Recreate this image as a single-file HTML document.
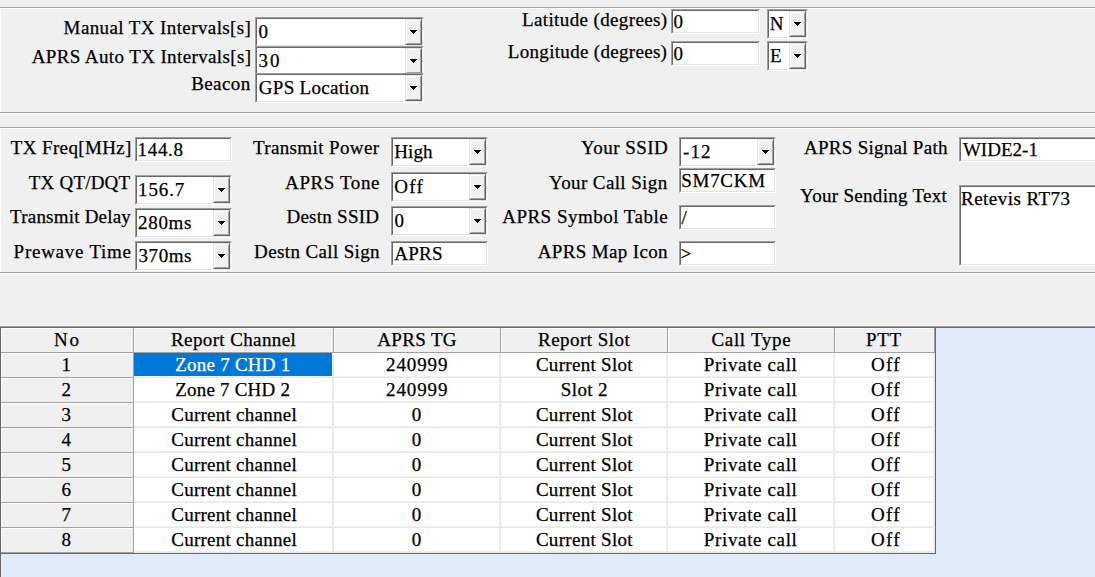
<!DOCTYPE html>
<html><head><meta charset="utf-8"><style>
html,body{margin:0;padding:0;width:1095px;height:577px;overflow:hidden;background:#f0f0f0;position:relative}
div{position:absolute;box-sizing:border-box}
.t{font-family:"Liberation Serif",serif;font-size:19px;line-height:20px;white-space:pre;color:#000;-webkit-text-stroke:0.25px #000}
.r{text-align:right}
.c{text-align:center}
.sk{border-style:solid;border-width:1px;border-color:#a0a0a0 #ffffff #ffffff #a0a0a0;background:#fff}
.ski{left:0;top:0;right:0;bottom:0;border-style:solid;border-width:1px;border-color:#696969 #e3e3e3 #e3e3e3 #696969}
.btn{border-style:solid;border-width:1px;border-color:#e3e3e3 #696969 #696969 #e3e3e3;background:#f0f0f0}
.bti{left:0;top:0;right:0;bottom:0;border-style:solid;border-width:1px;border-color:#ffffff #a0a0a0 #a0a0a0 #ffffff}
.ar{height:1px;background:#000}
</style></head><body>
<div class="ln" style="left:0px;top:7px;width:1095px;height:1px;background:#a0a0a0"></div>
<div class="ln" style="left:0px;top:8px;width:1095px;height:1px;background:#ffffff"></div>
<div class="ln" style="left:0px;top:8px;width:1px;height:104px;background:#ffffff"></div>
<div class="ln" style="left:0px;top:112px;width:1095px;height:1px;background:#a0a0a0"></div>
<div class="ln" style="left:0px;top:113px;width:1095px;height:1px;background:#ffffff"></div>
<div class="ln" style="left:0px;top:127px;width:1095px;height:1px;background:#a0a0a0"></div>
<div class="ln" style="left:0px;top:128px;width:1095px;height:1px;background:#ffffff"></div>
<div class="ln" style="left:0px;top:128px;width:1px;height:144px;background:#ffffff"></div>
<div class="ln" style="left:0px;top:272px;width:1095px;height:1px;background:#a0a0a0"></div>
<div class="ln" style="left:0px;top:273px;width:1095px;height:1px;background:#ffffff"></div>
<div class="t" style="left:63.60px;top:18px;letter-spacing:0.395px">Manual TX Intervals[s]</div>
<div class="t" style="left:31.70px;top:47px;letter-spacing:0.383px">APRS Auto TX Intervals[s]</div>
<div class="t" style="left:191.20px;top:74px;letter-spacing:0.400px">Beacon</div>
<div class="sk" style="left:255px;top:17px;width:169px;height:30px"><div class="ski"></div></div>
<div class="btn" style="left:405px;top:19px;width:17px;height:26px"><div class="bti"></div></div>
<div class="ar" style="left:410px;top:30px;width:7px"></div>
<div class="ar" style="left:411px;top:31px;width:5px"></div>
<div class="ar" style="left:412px;top:32px;width:3px"></div>
<div class="ar" style="left:413px;top:33px;width:1px"></div>
<div class="t" style="left:258.60px;top:22px">0</div>
<div class="sk" style="left:255px;top:46px;width:169px;height:30px"><div class="ski"></div></div>
<div class="btn" style="left:405px;top:48px;width:17px;height:26px"><div class="bti"></div></div>
<div class="ar" style="left:410px;top:59px;width:7px"></div>
<div class="ar" style="left:411px;top:60px;width:5px"></div>
<div class="ar" style="left:412px;top:61px;width:3px"></div>
<div class="ar" style="left:413px;top:62px;width:1px"></div>
<div class="t" style="left:258.60px;top:51px;letter-spacing:2.000px">30</div>
<div class="sk" style="left:255px;top:73px;width:169px;height:30px"><div class="ski"></div></div>
<div class="btn" style="left:405px;top:75px;width:17px;height:26px"><div class="bti"></div></div>
<div class="ar" style="left:410px;top:86px;width:7px"></div>
<div class="ar" style="left:411px;top:87px;width:5px"></div>
<div class="ar" style="left:412px;top:88px;width:3px"></div>
<div class="ar" style="left:413px;top:89px;width:1px"></div>
<div class="t" style="left:258.85px;top:78px;letter-spacing:0.277px">GPS Location</div>
<div class="t" style="left:522.00px;top:10px;letter-spacing:0.376px">Latitude (degrees)</div>
<div class="t" style="left:507.80px;top:42px;letter-spacing:0.311px">Longitude (degrees)</div>
<div class="sk" style="left:671px;top:9px;width:89px;height:25px"><div class="ski"></div></div>
<div class="t" style="left:673.50px;top:12px">0</div>
<div class="sk" style="left:671px;top:41px;width:89px;height:25px"><div class="ski"></div></div>
<div class="t" style="left:673.50px;top:44px">0</div>
<div class="sk" style="left:767px;top:9px;width:41px;height:30px"><div class="ski"></div></div>
<div class="btn" style="left:789px;top:11px;width:17px;height:26px"><div class="bti"></div></div>
<div class="ar" style="left:794px;top:22px;width:7px"></div>
<div class="ar" style="left:795px;top:23px;width:5px"></div>
<div class="ar" style="left:796px;top:24px;width:3px"></div>
<div class="ar" style="left:797px;top:25px;width:1px"></div>
<div class="t" style="left:769.70px;top:14px">N</div>
<div class="sk" style="left:767px;top:41px;width:41px;height:30px"><div class="ski"></div></div>
<div class="btn" style="left:789px;top:43px;width:17px;height:26px"><div class="bti"></div></div>
<div class="ar" style="left:794px;top:54px;width:7px"></div>
<div class="ar" style="left:795px;top:55px;width:5px"></div>
<div class="ar" style="left:796px;top:56px;width:3px"></div>
<div class="ar" style="left:797px;top:57px;width:1px"></div>
<div class="t" style="left:770.10px;top:46px">E</div>
<div class="t" style="left:10.80px;top:138px;letter-spacing:0.364px">TX Freq[MHz]</div>
<div class="t" style="left:28.80px;top:173px;letter-spacing:0.200px">TX QT/DQT</div>
<div class="t" style="left:10.10px;top:207px;letter-spacing:0.208px">Transmit Delay</div>
<div class="t" style="left:13.60px;top:242px;letter-spacing:0.745px">Prewave Time</div>
<div class="sk" style="left:135px;top:137px;width:97px;height:25px"><div class="ski"></div></div>
<div class="t" style="left:137.50px;top:140px;letter-spacing:0.700px">144.8</div>
<div class="sk" style="left:135px;top:175px;width:97px;height:30px"><div class="ski"></div></div>
<div class="btn" style="left:213px;top:177px;width:17px;height:26px"><div class="bti"></div></div>
<div class="ar" style="left:218px;top:188px;width:7px"></div>
<div class="ar" style="left:219px;top:189px;width:5px"></div>
<div class="ar" style="left:220px;top:190px;width:3px"></div>
<div class="ar" style="left:221px;top:191px;width:1px"></div>
<div class="t" style="left:138.10px;top:180px;letter-spacing:0.875px">156.7</div>
<div class="sk" style="left:135px;top:208px;width:97px;height:30px"><div class="ski"></div></div>
<div class="btn" style="left:213px;top:210px;width:17px;height:26px"><div class="bti"></div></div>
<div class="ar" style="left:218px;top:221px;width:7px"></div>
<div class="ar" style="left:219px;top:222px;width:5px"></div>
<div class="ar" style="left:220px;top:223px;width:3px"></div>
<div class="ar" style="left:221px;top:224px;width:1px"></div>
<div class="t" style="left:138.00px;top:213px;letter-spacing:0.700px">280ms</div>
<div class="sk" style="left:135px;top:241px;width:97px;height:30px"><div class="ski"></div></div>
<div class="btn" style="left:213px;top:243px;width:17px;height:26px"><div class="bti"></div></div>
<div class="ar" style="left:218px;top:254px;width:7px"></div>
<div class="ar" style="left:219px;top:255px;width:5px"></div>
<div class="ar" style="left:220px;top:256px;width:3px"></div>
<div class="ar" style="left:221px;top:257px;width:1px"></div>
<div class="t" style="left:138.50px;top:246px;letter-spacing:0.575px">370ms</div>
<div class="t" style="left:252.90px;top:138px;letter-spacing:0.377px">Transmit Power</div>
<div class="t" style="left:285.10px;top:173px;letter-spacing:0.587px">APRS Tone</div>
<div class="t" style="left:286.40px;top:207px;letter-spacing:0.267px">Destn SSID</div>
<div class="t" style="left:254.10px;top:242px;letter-spacing:0.371px">Destn Call Sign</div>
<div class="sk" style="left:391px;top:137px;width:97px;height:30px"><div class="ski"></div></div>
<div class="btn" style="left:469px;top:139px;width:17px;height:26px"><div class="bti"></div></div>
<div class="ar" style="left:474px;top:150px;width:7px"></div>
<div class="ar" style="left:475px;top:151px;width:5px"></div>
<div class="ar" style="left:476px;top:152px;width:3px"></div>
<div class="ar" style="left:477px;top:153px;width:1px"></div>
<div class="t" style="left:394.20px;top:142px;letter-spacing:0.133px">High</div>
<div class="sk" style="left:391px;top:172px;width:97px;height:30px"><div class="ski"></div></div>
<div class="btn" style="left:469px;top:174px;width:17px;height:26px"><div class="bti"></div></div>
<div class="ar" style="left:474px;top:185px;width:7px"></div>
<div class="ar" style="left:475px;top:186px;width:5px"></div>
<div class="ar" style="left:476px;top:187px;width:3px"></div>
<div class="ar" style="left:477px;top:188px;width:1px"></div>
<div class="t" style="left:394.20px;top:177px;letter-spacing:1.250px">Off</div>
<div class="sk" style="left:391px;top:206px;width:97px;height:30px"><div class="ski"></div></div>
<div class="btn" style="left:469px;top:208px;width:17px;height:26px"><div class="bti"></div></div>
<div class="ar" style="left:474px;top:219px;width:7px"></div>
<div class="ar" style="left:475px;top:220px;width:5px"></div>
<div class="ar" style="left:476px;top:221px;width:3px"></div>
<div class="ar" style="left:477px;top:222px;width:1px"></div>
<div class="t" style="left:394.40px;top:211px">0</div>
<div class="sk" style="left:391px;top:241px;width:97px;height:25px"><div class="ski"></div></div>
<div class="t" style="left:394.30px;top:244px;letter-spacing:0.233px">APRS</div>
<div class="t" style="left:581.00px;top:138px;letter-spacing:0.450px">Your SSID</div>
<div class="t" style="left:549.00px;top:173px;letter-spacing:0.385px">Your Call Sign</div>
<div class="t" style="left:502.20px;top:207px;letter-spacing:0.488px">APRS Symbol Table</div>
<div class="t" style="left:537.80px;top:242px;letter-spacing:0.350px">APRS Map Icon</div>
<div class="sk" style="left:679px;top:137px;width:97px;height:30px"><div class="ski"></div></div>
<div class="btn" style="left:757px;top:139px;width:17px;height:26px"><div class="bti"></div></div>
<div class="ar" style="left:762px;top:150px;width:7px"></div>
<div class="ar" style="left:763px;top:151px;width:5px"></div>
<div class="ar" style="left:764px;top:152px;width:3px"></div>
<div class="ar" style="left:765px;top:153px;width:1px"></div>
<div class="t" style="left:682.90px;top:142px;letter-spacing:1.200px">-12</div>
<div class="sk" style="left:679px;top:168px;width:97px;height:25px"><div class="ski"></div></div>
<div class="t" style="left:681.30px;top:171px;letter-spacing:0.700px">SM7CKM</div>
<div class="sk" style="left:679px;top:205px;width:97px;height:25px"><div class="ski"></div></div>
<div class="t" style="left:681.60px;top:208px">/</div>
<div class="sk" style="left:679px;top:241px;width:97px;height:25px"><div class="ski"></div></div>
<div class="t" style="left:680.60px;top:244px">&gt;</div>
<div class="t" style="left:804.00px;top:138px;letter-spacing:0.273px">APRS Signal Path</div>
<div class="t" style="left:800.10px;top:186px;letter-spacing:0.294px">Your Sending Text</div>
<div class="sk" style="left:959px;top:137px;width:200px;height:25px"><div class="ski"></div></div>
<div class="t" style="left:962.90px;top:140px;letter-spacing:0.017px">WIDE2-1</div>
<div class="sk" style="left:959px;top:185px;width:200px;height:81px"><div class="ski"></div></div>
<div class="t" style="left:961.00px;top:189px;letter-spacing:0.464px">Retevis RT73</div>
<div class="ln" style="left:0px;top:326px;width:1095px;height:251px;background:#dfebf9"></div>
<div class="ln" style="left:0px;top:326px;width:1095px;height:1px;background:#a0a0a0"></div>
<div class="ln" style="left:0px;top:327px;width:1095px;height:1px;background:#696969"></div>
<div class="ln" style="left:0px;top:327px;width:1px;height:250px;background:#696969"></div>
<div class="ln" style="left:1px;top:328px;width:133px;height:25px;background:#f0f0f0"></div>
<div class="ln" style="left:1px;top:328px;width:132px;height:1px;background:#ffffff"></div>
<div class="ln" style="left:1px;top:328px;width:1px;height:24px;background:#ffffff"></div>
<div class="ln" style="left:133px;top:328px;width:1px;height:25px;background:#a0a0a0"></div>
<div class="ln" style="left:1px;top:352px;width:133px;height:1px;background:#a0a0a0"></div>
<div class="ln" style="left:134px;top:328px;width:200px;height:25px;background:#f0f0f0"></div>
<div class="ln" style="left:134px;top:328px;width:199px;height:1px;background:#ffffff"></div>
<div class="ln" style="left:134px;top:328px;width:1px;height:24px;background:#ffffff"></div>
<div class="ln" style="left:333px;top:328px;width:1px;height:25px;background:#a0a0a0"></div>
<div class="ln" style="left:134px;top:352px;width:200px;height:1px;background:#a0a0a0"></div>
<div class="ln" style="left:334px;top:328px;width:167px;height:25px;background:#f0f0f0"></div>
<div class="ln" style="left:334px;top:328px;width:166px;height:1px;background:#ffffff"></div>
<div class="ln" style="left:334px;top:328px;width:1px;height:24px;background:#ffffff"></div>
<div class="ln" style="left:500px;top:328px;width:1px;height:25px;background:#a0a0a0"></div>
<div class="ln" style="left:334px;top:352px;width:167px;height:1px;background:#a0a0a0"></div>
<div class="ln" style="left:501px;top:328px;width:167px;height:25px;background:#f0f0f0"></div>
<div class="ln" style="left:501px;top:328px;width:166px;height:1px;background:#ffffff"></div>
<div class="ln" style="left:501px;top:328px;width:1px;height:24px;background:#ffffff"></div>
<div class="ln" style="left:667px;top:328px;width:1px;height:25px;background:#a0a0a0"></div>
<div class="ln" style="left:501px;top:352px;width:167px;height:1px;background:#a0a0a0"></div>
<div class="ln" style="left:668px;top:328px;width:167px;height:25px;background:#f0f0f0"></div>
<div class="ln" style="left:668px;top:328px;width:166px;height:1px;background:#ffffff"></div>
<div class="ln" style="left:668px;top:328px;width:1px;height:24px;background:#ffffff"></div>
<div class="ln" style="left:834px;top:328px;width:1px;height:25px;background:#a0a0a0"></div>
<div class="ln" style="left:668px;top:352px;width:167px;height:1px;background:#a0a0a0"></div>
<div class="ln" style="left:835px;top:328px;width:100px;height:25px;background:#f0f0f0"></div>
<div class="ln" style="left:835px;top:328px;width:99px;height:1px;background:#ffffff"></div>
<div class="ln" style="left:835px;top:328px;width:1px;height:24px;background:#ffffff"></div>
<div class="ln" style="left:934px;top:328px;width:1px;height:25px;background:#a0a0a0"></div>
<div class="ln" style="left:835px;top:352px;width:100px;height:1px;background:#a0a0a0"></div>
<div class="ln" style="left:1px;top:353px;width:133px;height:25px;background:#f0f0f0"></div>
<div class="ln" style="left:1px;top:353px;width:132px;height:1px;background:#ffffff"></div>
<div class="ln" style="left:1px;top:353px;width:1px;height:24px;background:#ffffff"></div>
<div class="ln" style="left:133px;top:353px;width:1px;height:25px;background:#a0a0a0"></div>
<div class="ln" style="left:1px;top:377px;width:133px;height:1px;background:#a0a0a0"></div>
<div class="ln" style="left:134px;top:353px;width:200px;height:25px;background:#ffffff"></div>
<div class="ln" style="left:332px;top:353px;width:1px;height:25px;background:#f0f0f0"></div>
<div class="ln" style="left:134px;top:376px;width:199px;height:1px;background:#f0f0f0"></div>
<div class="ln" style="left:333px;top:353px;width:1px;height:25px;background:#e8e8e8"></div>
<div class="ln" style="left:134px;top:377px;width:200px;height:1px;background:#e8e8e8"></div>
<div class="ln" style="left:334px;top:353px;width:167px;height:25px;background:#ffffff"></div>
<div class="ln" style="left:499px;top:353px;width:1px;height:25px;background:#f0f0f0"></div>
<div class="ln" style="left:334px;top:376px;width:166px;height:1px;background:#f0f0f0"></div>
<div class="ln" style="left:500px;top:353px;width:1px;height:25px;background:#e8e8e8"></div>
<div class="ln" style="left:334px;top:377px;width:167px;height:1px;background:#e8e8e8"></div>
<div class="ln" style="left:501px;top:353px;width:167px;height:25px;background:#ffffff"></div>
<div class="ln" style="left:666px;top:353px;width:1px;height:25px;background:#f0f0f0"></div>
<div class="ln" style="left:501px;top:376px;width:166px;height:1px;background:#f0f0f0"></div>
<div class="ln" style="left:667px;top:353px;width:1px;height:25px;background:#e8e8e8"></div>
<div class="ln" style="left:501px;top:377px;width:167px;height:1px;background:#e8e8e8"></div>
<div class="ln" style="left:668px;top:353px;width:167px;height:25px;background:#ffffff"></div>
<div class="ln" style="left:833px;top:353px;width:1px;height:25px;background:#f0f0f0"></div>
<div class="ln" style="left:668px;top:376px;width:166px;height:1px;background:#f0f0f0"></div>
<div class="ln" style="left:834px;top:353px;width:1px;height:25px;background:#e8e8e8"></div>
<div class="ln" style="left:668px;top:377px;width:167px;height:1px;background:#e8e8e8"></div>
<div class="ln" style="left:835px;top:353px;width:100px;height:25px;background:#ffffff"></div>
<div class="ln" style="left:933px;top:353px;width:1px;height:25px;background:#f0f0f0"></div>
<div class="ln" style="left:835px;top:376px;width:99px;height:1px;background:#f0f0f0"></div>
<div class="ln" style="left:934px;top:353px;width:1px;height:25px;background:#e8e8e8"></div>
<div class="ln" style="left:835px;top:377px;width:100px;height:1px;background:#e8e8e8"></div>
<div class="ln" style="left:1px;top:378px;width:133px;height:25px;background:#f0f0f0"></div>
<div class="ln" style="left:1px;top:378px;width:132px;height:1px;background:#ffffff"></div>
<div class="ln" style="left:1px;top:378px;width:1px;height:24px;background:#ffffff"></div>
<div class="ln" style="left:133px;top:378px;width:1px;height:25px;background:#a0a0a0"></div>
<div class="ln" style="left:1px;top:402px;width:133px;height:1px;background:#a0a0a0"></div>
<div class="ln" style="left:134px;top:378px;width:200px;height:25px;background:#ffffff"></div>
<div class="ln" style="left:332px;top:378px;width:1px;height:25px;background:#f0f0f0"></div>
<div class="ln" style="left:134px;top:401px;width:199px;height:1px;background:#f0f0f0"></div>
<div class="ln" style="left:333px;top:378px;width:1px;height:25px;background:#e8e8e8"></div>
<div class="ln" style="left:134px;top:402px;width:200px;height:1px;background:#e8e8e8"></div>
<div class="ln" style="left:334px;top:378px;width:167px;height:25px;background:#ffffff"></div>
<div class="ln" style="left:499px;top:378px;width:1px;height:25px;background:#f0f0f0"></div>
<div class="ln" style="left:334px;top:401px;width:166px;height:1px;background:#f0f0f0"></div>
<div class="ln" style="left:500px;top:378px;width:1px;height:25px;background:#e8e8e8"></div>
<div class="ln" style="left:334px;top:402px;width:167px;height:1px;background:#e8e8e8"></div>
<div class="ln" style="left:501px;top:378px;width:167px;height:25px;background:#ffffff"></div>
<div class="ln" style="left:666px;top:378px;width:1px;height:25px;background:#f0f0f0"></div>
<div class="ln" style="left:501px;top:401px;width:166px;height:1px;background:#f0f0f0"></div>
<div class="ln" style="left:667px;top:378px;width:1px;height:25px;background:#e8e8e8"></div>
<div class="ln" style="left:501px;top:402px;width:167px;height:1px;background:#e8e8e8"></div>
<div class="ln" style="left:668px;top:378px;width:167px;height:25px;background:#ffffff"></div>
<div class="ln" style="left:833px;top:378px;width:1px;height:25px;background:#f0f0f0"></div>
<div class="ln" style="left:668px;top:401px;width:166px;height:1px;background:#f0f0f0"></div>
<div class="ln" style="left:834px;top:378px;width:1px;height:25px;background:#e8e8e8"></div>
<div class="ln" style="left:668px;top:402px;width:167px;height:1px;background:#e8e8e8"></div>
<div class="ln" style="left:835px;top:378px;width:100px;height:25px;background:#ffffff"></div>
<div class="ln" style="left:933px;top:378px;width:1px;height:25px;background:#f0f0f0"></div>
<div class="ln" style="left:835px;top:401px;width:99px;height:1px;background:#f0f0f0"></div>
<div class="ln" style="left:934px;top:378px;width:1px;height:25px;background:#e8e8e8"></div>
<div class="ln" style="left:835px;top:402px;width:100px;height:1px;background:#e8e8e8"></div>
<div class="ln" style="left:1px;top:403px;width:133px;height:25px;background:#f0f0f0"></div>
<div class="ln" style="left:1px;top:403px;width:132px;height:1px;background:#ffffff"></div>
<div class="ln" style="left:1px;top:403px;width:1px;height:24px;background:#ffffff"></div>
<div class="ln" style="left:133px;top:403px;width:1px;height:25px;background:#a0a0a0"></div>
<div class="ln" style="left:1px;top:427px;width:133px;height:1px;background:#a0a0a0"></div>
<div class="ln" style="left:134px;top:403px;width:200px;height:25px;background:#ffffff"></div>
<div class="ln" style="left:332px;top:403px;width:1px;height:25px;background:#f0f0f0"></div>
<div class="ln" style="left:134px;top:426px;width:199px;height:1px;background:#f0f0f0"></div>
<div class="ln" style="left:333px;top:403px;width:1px;height:25px;background:#e8e8e8"></div>
<div class="ln" style="left:134px;top:427px;width:200px;height:1px;background:#e8e8e8"></div>
<div class="ln" style="left:334px;top:403px;width:167px;height:25px;background:#ffffff"></div>
<div class="ln" style="left:499px;top:403px;width:1px;height:25px;background:#f0f0f0"></div>
<div class="ln" style="left:334px;top:426px;width:166px;height:1px;background:#f0f0f0"></div>
<div class="ln" style="left:500px;top:403px;width:1px;height:25px;background:#e8e8e8"></div>
<div class="ln" style="left:334px;top:427px;width:167px;height:1px;background:#e8e8e8"></div>
<div class="ln" style="left:501px;top:403px;width:167px;height:25px;background:#ffffff"></div>
<div class="ln" style="left:666px;top:403px;width:1px;height:25px;background:#f0f0f0"></div>
<div class="ln" style="left:501px;top:426px;width:166px;height:1px;background:#f0f0f0"></div>
<div class="ln" style="left:667px;top:403px;width:1px;height:25px;background:#e8e8e8"></div>
<div class="ln" style="left:501px;top:427px;width:167px;height:1px;background:#e8e8e8"></div>
<div class="ln" style="left:668px;top:403px;width:167px;height:25px;background:#ffffff"></div>
<div class="ln" style="left:833px;top:403px;width:1px;height:25px;background:#f0f0f0"></div>
<div class="ln" style="left:668px;top:426px;width:166px;height:1px;background:#f0f0f0"></div>
<div class="ln" style="left:834px;top:403px;width:1px;height:25px;background:#e8e8e8"></div>
<div class="ln" style="left:668px;top:427px;width:167px;height:1px;background:#e8e8e8"></div>
<div class="ln" style="left:835px;top:403px;width:100px;height:25px;background:#ffffff"></div>
<div class="ln" style="left:933px;top:403px;width:1px;height:25px;background:#f0f0f0"></div>
<div class="ln" style="left:835px;top:426px;width:99px;height:1px;background:#f0f0f0"></div>
<div class="ln" style="left:934px;top:403px;width:1px;height:25px;background:#e8e8e8"></div>
<div class="ln" style="left:835px;top:427px;width:100px;height:1px;background:#e8e8e8"></div>
<div class="ln" style="left:1px;top:428px;width:133px;height:25px;background:#f0f0f0"></div>
<div class="ln" style="left:1px;top:428px;width:132px;height:1px;background:#ffffff"></div>
<div class="ln" style="left:1px;top:428px;width:1px;height:24px;background:#ffffff"></div>
<div class="ln" style="left:133px;top:428px;width:1px;height:25px;background:#a0a0a0"></div>
<div class="ln" style="left:1px;top:452px;width:133px;height:1px;background:#a0a0a0"></div>
<div class="ln" style="left:134px;top:428px;width:200px;height:25px;background:#ffffff"></div>
<div class="ln" style="left:332px;top:428px;width:1px;height:25px;background:#f0f0f0"></div>
<div class="ln" style="left:134px;top:451px;width:199px;height:1px;background:#f0f0f0"></div>
<div class="ln" style="left:333px;top:428px;width:1px;height:25px;background:#e8e8e8"></div>
<div class="ln" style="left:134px;top:452px;width:200px;height:1px;background:#e8e8e8"></div>
<div class="ln" style="left:334px;top:428px;width:167px;height:25px;background:#ffffff"></div>
<div class="ln" style="left:499px;top:428px;width:1px;height:25px;background:#f0f0f0"></div>
<div class="ln" style="left:334px;top:451px;width:166px;height:1px;background:#f0f0f0"></div>
<div class="ln" style="left:500px;top:428px;width:1px;height:25px;background:#e8e8e8"></div>
<div class="ln" style="left:334px;top:452px;width:167px;height:1px;background:#e8e8e8"></div>
<div class="ln" style="left:501px;top:428px;width:167px;height:25px;background:#ffffff"></div>
<div class="ln" style="left:666px;top:428px;width:1px;height:25px;background:#f0f0f0"></div>
<div class="ln" style="left:501px;top:451px;width:166px;height:1px;background:#f0f0f0"></div>
<div class="ln" style="left:667px;top:428px;width:1px;height:25px;background:#e8e8e8"></div>
<div class="ln" style="left:501px;top:452px;width:167px;height:1px;background:#e8e8e8"></div>
<div class="ln" style="left:668px;top:428px;width:167px;height:25px;background:#ffffff"></div>
<div class="ln" style="left:833px;top:428px;width:1px;height:25px;background:#f0f0f0"></div>
<div class="ln" style="left:668px;top:451px;width:166px;height:1px;background:#f0f0f0"></div>
<div class="ln" style="left:834px;top:428px;width:1px;height:25px;background:#e8e8e8"></div>
<div class="ln" style="left:668px;top:452px;width:167px;height:1px;background:#e8e8e8"></div>
<div class="ln" style="left:835px;top:428px;width:100px;height:25px;background:#ffffff"></div>
<div class="ln" style="left:933px;top:428px;width:1px;height:25px;background:#f0f0f0"></div>
<div class="ln" style="left:835px;top:451px;width:99px;height:1px;background:#f0f0f0"></div>
<div class="ln" style="left:934px;top:428px;width:1px;height:25px;background:#e8e8e8"></div>
<div class="ln" style="left:835px;top:452px;width:100px;height:1px;background:#e8e8e8"></div>
<div class="ln" style="left:1px;top:453px;width:133px;height:25px;background:#f0f0f0"></div>
<div class="ln" style="left:1px;top:453px;width:132px;height:1px;background:#ffffff"></div>
<div class="ln" style="left:1px;top:453px;width:1px;height:24px;background:#ffffff"></div>
<div class="ln" style="left:133px;top:453px;width:1px;height:25px;background:#a0a0a0"></div>
<div class="ln" style="left:1px;top:477px;width:133px;height:1px;background:#a0a0a0"></div>
<div class="ln" style="left:134px;top:453px;width:200px;height:25px;background:#ffffff"></div>
<div class="ln" style="left:332px;top:453px;width:1px;height:25px;background:#f0f0f0"></div>
<div class="ln" style="left:134px;top:476px;width:199px;height:1px;background:#f0f0f0"></div>
<div class="ln" style="left:333px;top:453px;width:1px;height:25px;background:#e8e8e8"></div>
<div class="ln" style="left:134px;top:477px;width:200px;height:1px;background:#e8e8e8"></div>
<div class="ln" style="left:334px;top:453px;width:167px;height:25px;background:#ffffff"></div>
<div class="ln" style="left:499px;top:453px;width:1px;height:25px;background:#f0f0f0"></div>
<div class="ln" style="left:334px;top:476px;width:166px;height:1px;background:#f0f0f0"></div>
<div class="ln" style="left:500px;top:453px;width:1px;height:25px;background:#e8e8e8"></div>
<div class="ln" style="left:334px;top:477px;width:167px;height:1px;background:#e8e8e8"></div>
<div class="ln" style="left:501px;top:453px;width:167px;height:25px;background:#ffffff"></div>
<div class="ln" style="left:666px;top:453px;width:1px;height:25px;background:#f0f0f0"></div>
<div class="ln" style="left:501px;top:476px;width:166px;height:1px;background:#f0f0f0"></div>
<div class="ln" style="left:667px;top:453px;width:1px;height:25px;background:#e8e8e8"></div>
<div class="ln" style="left:501px;top:477px;width:167px;height:1px;background:#e8e8e8"></div>
<div class="ln" style="left:668px;top:453px;width:167px;height:25px;background:#ffffff"></div>
<div class="ln" style="left:833px;top:453px;width:1px;height:25px;background:#f0f0f0"></div>
<div class="ln" style="left:668px;top:476px;width:166px;height:1px;background:#f0f0f0"></div>
<div class="ln" style="left:834px;top:453px;width:1px;height:25px;background:#e8e8e8"></div>
<div class="ln" style="left:668px;top:477px;width:167px;height:1px;background:#e8e8e8"></div>
<div class="ln" style="left:835px;top:453px;width:100px;height:25px;background:#ffffff"></div>
<div class="ln" style="left:933px;top:453px;width:1px;height:25px;background:#f0f0f0"></div>
<div class="ln" style="left:835px;top:476px;width:99px;height:1px;background:#f0f0f0"></div>
<div class="ln" style="left:934px;top:453px;width:1px;height:25px;background:#e8e8e8"></div>
<div class="ln" style="left:835px;top:477px;width:100px;height:1px;background:#e8e8e8"></div>
<div class="ln" style="left:1px;top:478px;width:133px;height:25px;background:#f0f0f0"></div>
<div class="ln" style="left:1px;top:478px;width:132px;height:1px;background:#ffffff"></div>
<div class="ln" style="left:1px;top:478px;width:1px;height:24px;background:#ffffff"></div>
<div class="ln" style="left:133px;top:478px;width:1px;height:25px;background:#a0a0a0"></div>
<div class="ln" style="left:1px;top:502px;width:133px;height:1px;background:#a0a0a0"></div>
<div class="ln" style="left:134px;top:478px;width:200px;height:25px;background:#ffffff"></div>
<div class="ln" style="left:332px;top:478px;width:1px;height:25px;background:#f0f0f0"></div>
<div class="ln" style="left:134px;top:501px;width:199px;height:1px;background:#f0f0f0"></div>
<div class="ln" style="left:333px;top:478px;width:1px;height:25px;background:#e8e8e8"></div>
<div class="ln" style="left:134px;top:502px;width:200px;height:1px;background:#e8e8e8"></div>
<div class="ln" style="left:334px;top:478px;width:167px;height:25px;background:#ffffff"></div>
<div class="ln" style="left:499px;top:478px;width:1px;height:25px;background:#f0f0f0"></div>
<div class="ln" style="left:334px;top:501px;width:166px;height:1px;background:#f0f0f0"></div>
<div class="ln" style="left:500px;top:478px;width:1px;height:25px;background:#e8e8e8"></div>
<div class="ln" style="left:334px;top:502px;width:167px;height:1px;background:#e8e8e8"></div>
<div class="ln" style="left:501px;top:478px;width:167px;height:25px;background:#ffffff"></div>
<div class="ln" style="left:666px;top:478px;width:1px;height:25px;background:#f0f0f0"></div>
<div class="ln" style="left:501px;top:501px;width:166px;height:1px;background:#f0f0f0"></div>
<div class="ln" style="left:667px;top:478px;width:1px;height:25px;background:#e8e8e8"></div>
<div class="ln" style="left:501px;top:502px;width:167px;height:1px;background:#e8e8e8"></div>
<div class="ln" style="left:668px;top:478px;width:167px;height:25px;background:#ffffff"></div>
<div class="ln" style="left:833px;top:478px;width:1px;height:25px;background:#f0f0f0"></div>
<div class="ln" style="left:668px;top:501px;width:166px;height:1px;background:#f0f0f0"></div>
<div class="ln" style="left:834px;top:478px;width:1px;height:25px;background:#e8e8e8"></div>
<div class="ln" style="left:668px;top:502px;width:167px;height:1px;background:#e8e8e8"></div>
<div class="ln" style="left:835px;top:478px;width:100px;height:25px;background:#ffffff"></div>
<div class="ln" style="left:933px;top:478px;width:1px;height:25px;background:#f0f0f0"></div>
<div class="ln" style="left:835px;top:501px;width:99px;height:1px;background:#f0f0f0"></div>
<div class="ln" style="left:934px;top:478px;width:1px;height:25px;background:#e8e8e8"></div>
<div class="ln" style="left:835px;top:502px;width:100px;height:1px;background:#e8e8e8"></div>
<div class="ln" style="left:1px;top:503px;width:133px;height:25px;background:#f0f0f0"></div>
<div class="ln" style="left:1px;top:503px;width:132px;height:1px;background:#ffffff"></div>
<div class="ln" style="left:1px;top:503px;width:1px;height:24px;background:#ffffff"></div>
<div class="ln" style="left:133px;top:503px;width:1px;height:25px;background:#a0a0a0"></div>
<div class="ln" style="left:1px;top:527px;width:133px;height:1px;background:#a0a0a0"></div>
<div class="ln" style="left:134px;top:503px;width:200px;height:25px;background:#ffffff"></div>
<div class="ln" style="left:332px;top:503px;width:1px;height:25px;background:#f0f0f0"></div>
<div class="ln" style="left:134px;top:526px;width:199px;height:1px;background:#f0f0f0"></div>
<div class="ln" style="left:333px;top:503px;width:1px;height:25px;background:#e8e8e8"></div>
<div class="ln" style="left:134px;top:527px;width:200px;height:1px;background:#e8e8e8"></div>
<div class="ln" style="left:334px;top:503px;width:167px;height:25px;background:#ffffff"></div>
<div class="ln" style="left:499px;top:503px;width:1px;height:25px;background:#f0f0f0"></div>
<div class="ln" style="left:334px;top:526px;width:166px;height:1px;background:#f0f0f0"></div>
<div class="ln" style="left:500px;top:503px;width:1px;height:25px;background:#e8e8e8"></div>
<div class="ln" style="left:334px;top:527px;width:167px;height:1px;background:#e8e8e8"></div>
<div class="ln" style="left:501px;top:503px;width:167px;height:25px;background:#ffffff"></div>
<div class="ln" style="left:666px;top:503px;width:1px;height:25px;background:#f0f0f0"></div>
<div class="ln" style="left:501px;top:526px;width:166px;height:1px;background:#f0f0f0"></div>
<div class="ln" style="left:667px;top:503px;width:1px;height:25px;background:#e8e8e8"></div>
<div class="ln" style="left:501px;top:527px;width:167px;height:1px;background:#e8e8e8"></div>
<div class="ln" style="left:668px;top:503px;width:167px;height:25px;background:#ffffff"></div>
<div class="ln" style="left:833px;top:503px;width:1px;height:25px;background:#f0f0f0"></div>
<div class="ln" style="left:668px;top:526px;width:166px;height:1px;background:#f0f0f0"></div>
<div class="ln" style="left:834px;top:503px;width:1px;height:25px;background:#e8e8e8"></div>
<div class="ln" style="left:668px;top:527px;width:167px;height:1px;background:#e8e8e8"></div>
<div class="ln" style="left:835px;top:503px;width:100px;height:25px;background:#ffffff"></div>
<div class="ln" style="left:933px;top:503px;width:1px;height:25px;background:#f0f0f0"></div>
<div class="ln" style="left:835px;top:526px;width:99px;height:1px;background:#f0f0f0"></div>
<div class="ln" style="left:934px;top:503px;width:1px;height:25px;background:#e8e8e8"></div>
<div class="ln" style="left:835px;top:527px;width:100px;height:1px;background:#e8e8e8"></div>
<div class="ln" style="left:1px;top:528px;width:133px;height:25px;background:#f0f0f0"></div>
<div class="ln" style="left:1px;top:528px;width:132px;height:1px;background:#ffffff"></div>
<div class="ln" style="left:1px;top:528px;width:1px;height:24px;background:#ffffff"></div>
<div class="ln" style="left:133px;top:528px;width:1px;height:25px;background:#a0a0a0"></div>
<div class="ln" style="left:1px;top:552px;width:133px;height:1px;background:#a0a0a0"></div>
<div class="ln" style="left:134px;top:528px;width:200px;height:25px;background:#ffffff"></div>
<div class="ln" style="left:332px;top:528px;width:1px;height:25px;background:#f0f0f0"></div>
<div class="ln" style="left:134px;top:551px;width:199px;height:1px;background:#f0f0f0"></div>
<div class="ln" style="left:333px;top:528px;width:1px;height:25px;background:#e8e8e8"></div>
<div class="ln" style="left:134px;top:552px;width:200px;height:1px;background:#e8e8e8"></div>
<div class="ln" style="left:334px;top:528px;width:167px;height:25px;background:#ffffff"></div>
<div class="ln" style="left:499px;top:528px;width:1px;height:25px;background:#f0f0f0"></div>
<div class="ln" style="left:334px;top:551px;width:166px;height:1px;background:#f0f0f0"></div>
<div class="ln" style="left:500px;top:528px;width:1px;height:25px;background:#e8e8e8"></div>
<div class="ln" style="left:334px;top:552px;width:167px;height:1px;background:#e8e8e8"></div>
<div class="ln" style="left:501px;top:528px;width:167px;height:25px;background:#ffffff"></div>
<div class="ln" style="left:666px;top:528px;width:1px;height:25px;background:#f0f0f0"></div>
<div class="ln" style="left:501px;top:551px;width:166px;height:1px;background:#f0f0f0"></div>
<div class="ln" style="left:667px;top:528px;width:1px;height:25px;background:#e8e8e8"></div>
<div class="ln" style="left:501px;top:552px;width:167px;height:1px;background:#e8e8e8"></div>
<div class="ln" style="left:668px;top:528px;width:167px;height:25px;background:#ffffff"></div>
<div class="ln" style="left:833px;top:528px;width:1px;height:25px;background:#f0f0f0"></div>
<div class="ln" style="left:668px;top:551px;width:166px;height:1px;background:#f0f0f0"></div>
<div class="ln" style="left:834px;top:528px;width:1px;height:25px;background:#e8e8e8"></div>
<div class="ln" style="left:668px;top:552px;width:167px;height:1px;background:#e8e8e8"></div>
<div class="ln" style="left:835px;top:528px;width:100px;height:25px;background:#ffffff"></div>
<div class="ln" style="left:933px;top:528px;width:1px;height:25px;background:#f0f0f0"></div>
<div class="ln" style="left:835px;top:551px;width:99px;height:1px;background:#f0f0f0"></div>
<div class="ln" style="left:934px;top:528px;width:1px;height:25px;background:#e8e8e8"></div>
<div class="ln" style="left:835px;top:552px;width:100px;height:1px;background:#e8e8e8"></div>
<div class="ln" style="left:134px;top:353px;width:198px;height:23px;background:#0078d7"></div>
<div class="ln" style="left:935px;top:327px;width:1px;height:227px;background:#696969"></div>
<div class="ln" style="left:0px;top:553px;width:936px;height:1px;background:#696969"></div>
<div class="t" style="left:54.00px;top:330px;letter-spacing:1.800px">No</div>
<div class="t" style="left:171.00px;top:330px;letter-spacing:0.385px">Report Channel</div>
<div class="t" style="left:377.30px;top:330px;letter-spacing:0.333px">APRS TG</div>
<div class="t" style="left:538.00px;top:330px;letter-spacing:0.475px">Report Slot</div>
<div class="t" style="left:711.50px;top:330px;letter-spacing:0.662px">Call Type</div>
<div class="t" style="left:865.90px;top:330px;letter-spacing:0.750px">PTT</div>
<div class="t" style="left:61.50px;top:355px">1</div>
<div class="t" style="left:175.20px;top:355px;letter-spacing:0.236px;color:#fff;-webkit-text-stroke-color:#fff">Zone 7 CHD 1</div>
<div class="t" style="left:386.10px;top:355px;letter-spacing:0.880px">240999</div>
<div class="t" style="left:535.90px;top:355px;letter-spacing:0.300px">Current Slot</div>
<div class="t" style="left:703.80px;top:355px;letter-spacing:0.645px">Private call</div>
<div class="t" style="left:871.00px;top:355px;letter-spacing:1.250px">Off</div>
<div class="t" style="left:61.50px;top:380px">2</div>
<div class="t" style="left:175.20px;top:380px;letter-spacing:0.209px">Zone 7 CHD 2</div>
<div class="t" style="left:386.10px;top:380px;letter-spacing:0.880px">240999</div>
<div class="t" style="left:560.80px;top:380px;letter-spacing:0.380px">Slot 2</div>
<div class="t" style="left:703.80px;top:380px;letter-spacing:0.645px">Private call</div>
<div class="t" style="left:871.00px;top:380px;letter-spacing:1.250px">Off</div>
<div class="t" style="left:61.50px;top:405px">3</div>
<div class="t" style="left:171.30px;top:405px;letter-spacing:0.250px">Current channel</div>
<div class="t" style="left:411.70px;top:405px">0</div>
<div class="t" style="left:535.90px;top:405px;letter-spacing:0.300px">Current Slot</div>
<div class="t" style="left:703.80px;top:405px;letter-spacing:0.645px">Private call</div>
<div class="t" style="left:871.00px;top:405px;letter-spacing:1.250px">Off</div>
<div class="t" style="left:61.50px;top:430px">4</div>
<div class="t" style="left:171.30px;top:430px;letter-spacing:0.250px">Current channel</div>
<div class="t" style="left:411.70px;top:430px">0</div>
<div class="t" style="left:535.90px;top:430px;letter-spacing:0.300px">Current Slot</div>
<div class="t" style="left:703.80px;top:430px;letter-spacing:0.645px">Private call</div>
<div class="t" style="left:871.00px;top:430px;letter-spacing:1.250px">Off</div>
<div class="t" style="left:61.50px;top:455px">5</div>
<div class="t" style="left:171.30px;top:455px;letter-spacing:0.250px">Current channel</div>
<div class="t" style="left:411.70px;top:455px">0</div>
<div class="t" style="left:535.90px;top:455px;letter-spacing:0.300px">Current Slot</div>
<div class="t" style="left:703.80px;top:455px;letter-spacing:0.645px">Private call</div>
<div class="t" style="left:871.00px;top:455px;letter-spacing:1.250px">Off</div>
<div class="t" style="left:61.50px;top:480px">6</div>
<div class="t" style="left:171.30px;top:480px;letter-spacing:0.250px">Current channel</div>
<div class="t" style="left:411.70px;top:480px">0</div>
<div class="t" style="left:535.90px;top:480px;letter-spacing:0.300px">Current Slot</div>
<div class="t" style="left:703.80px;top:480px;letter-spacing:0.645px">Private call</div>
<div class="t" style="left:871.00px;top:480px;letter-spacing:1.250px">Off</div>
<div class="t" style="left:61.50px;top:505px">7</div>
<div class="t" style="left:171.30px;top:505px;letter-spacing:0.250px">Current channel</div>
<div class="t" style="left:411.70px;top:505px">0</div>
<div class="t" style="left:535.90px;top:505px;letter-spacing:0.300px">Current Slot</div>
<div class="t" style="left:703.80px;top:505px;letter-spacing:0.645px">Private call</div>
<div class="t" style="left:871.00px;top:505px;letter-spacing:1.250px">Off</div>
<div class="t" style="left:61.50px;top:530px">8</div>
<div class="t" style="left:171.30px;top:530px;letter-spacing:0.250px">Current channel</div>
<div class="t" style="left:411.70px;top:530px">0</div>
<div class="t" style="left:535.90px;top:530px;letter-spacing:0.300px">Current Slot</div>
<div class="t" style="left:703.80px;top:530px;letter-spacing:0.645px">Private call</div>
<div class="t" style="left:871.00px;top:530px;letter-spacing:1.250px">Off</div>
</body></html>
